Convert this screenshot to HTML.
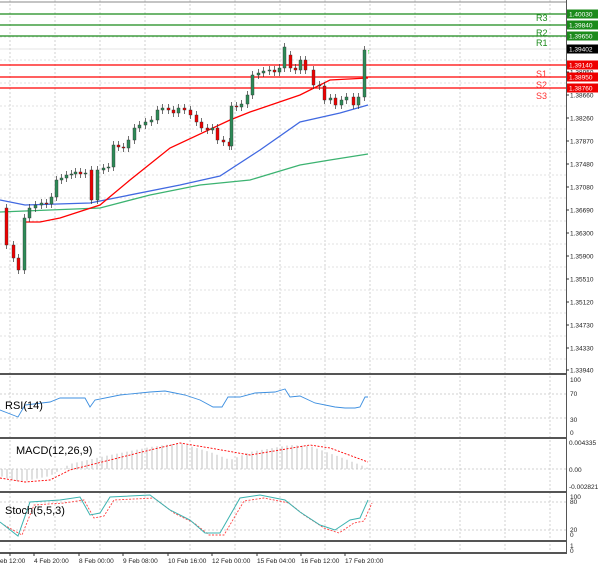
<!DOCTYPE html>
<html><head><meta charset="utf-8"><style>
body{margin:0;background:#fff;width:600px;height:569px;overflow:hidden;font-family:"Liberation Sans",sans-serif}
svg text{font-family:"Liberation Sans",sans-serif}
</style></head><body>
<svg id="s" width="600" height="569" xmlns="http://www.w3.org/2000/svg"></svg>
<script>
var s=document.getElementById('s'),h='';
function L(x1,y1,x2,y2,c,w,d){h+='<line x1="'+x1+'" y1="'+y1+'" x2="'+x2+'" y2="'+y2+'" stroke="'+c+'" stroke-width="'+(w||1)+'"'+(d?' stroke-dasharray="'+d+'"':'')+'/>';}
function P(pts,c,w,d){h+='<polyline fill="none" stroke="'+c+'" stroke-width="'+(w||1)+'"'+(d?' stroke-dasharray="'+d+'"':'')+' points="'+pts.map(function(p){return p.join(',')}).join(' ')+'"/>';}
function T(x,y,t,sz,c,a){h+='<text x="'+x+'" y="'+y+'" font-size="'+sz+'" fill="'+(c||'#000')+'"'+(a?' text-anchor="'+a+'"':'')+'>'+t+'</text>';}
for(var x=10;x<566;x+=45)L(x,0,x,553,'#d0d0d0',1,'2,2');
for(var y=14;y<372;y+=23)L(0,y,566,y,'#e0e0e0',1,'2,2');
[394,418,469,502,530].forEach(function(y){L(0,y,566,y,'#d0d0d0',1,'2,2')});
L(0,2,566,2,'#888',1);
[[14,'#1a8a1a'],[25,'#1a8a1a'],[36,'#1a8a1a']].forEach(function(a){L(0,a[0],566,a[0],a[1],1.3)});
[65,77,88].forEach(function(y){L(0,y,566,y,'#f00',1.3)});
L(0,49,566,49,'#ccc',0.6);
P([[0,212],[50,210],[100,208],[150,195],[200,185],[250,180],[300,165],[330,160],[368,154]],'#3cb371',1.3);
P([[0,200],[25,205],[90,203],[120,197],[180,185],[220,176],[260,150],[300,122],[340,113],[368,105]],'#4169e1',1.3);
P([[23,222],[40,222],[60,218],[100,205],[130,180],[170,148],[230,120],[250,112],[300,95],[330,80],[368,78]],'#f00',1.3);
var c=[[5,208,245],[12,245,258],[17,258,270],[23,270,218],[28,218,208],[34,208,205],[40,205,203],[45,203,204],[50,204,197],[55,197,180],[60,180,178],[65,178,175],[70,175,174],[74,174,172],[79,172,174],[84,174,173],[90,170,200],[96,200,170],[102,170,168],[107,168,167],[112,167,145],[117,145,147],[122,147,148],[127,148,140],[133,140,128],[138,128,125],[144,125,122],[150,122,120],[156,120,110],[161,110,108],[167,108,110],[172,110,113],[177,113,108],[183,108,110],[189,110,115],[195,115,122],[200,122,128],[206,128,130],[211,130,128],[216,128,140],[222,140,142],[228,142,146],[230,146,106],[235,106,107],[240,107,104],[246,104,95],[251,95,75],[257,75,73],[262,73,71],[268,71,70],[273,70,72],[278,72,68],[283,68,47],[289,55,68],[294,68,70],[299,70,60],[304,60,70],[312,70,85],[318,85,86],[323,86,100],[329,100,98],[334,98,105],[340,105,100],[345,100,97],[352,97,105],[357,105,97],[363,97,50]];
c.forEach(function(k){var t=Math.min(k[1],k[2]),b=Math.max(k[1],k[2]);L(k[0]+1.5,t-4,k[0]+1.5,b+4,'#333',0.7);h+='<rect x="'+k[0]+'" y="'+t+'" width="3" height="'+Math.max(1,b-t)+'" fill="'+(k[2]<k[1]?'#2e8b57':'#e00')+'" stroke="#333" stroke-width="0.4"/>';});
T(367,54,'↑',7,'#0c0');
T(536,21,'R3',9,'#1a8a1a');T(536,36,'R2',9,'#1a8a1a');T(536,46,'R1',9,'#1a8a1a');
T(536,77,'S1',9,'#f33');T(536,88,'S2',9,'#f33');T(536,99,'S3',9,'#f33');
L(566.5,0,566.5,553,'#555',1);
var pl=[['1.38660',95],['1.38260',118],['1.37870',141],['1.37480',164],['1.37080',187],['1.36690',210],['1.36300',233],['1.35900',256],['1.35510',279],['1.35120',302],['1.34730',325],['1.34330',348],['1.33940',370],['1.38950',72]];
pl.forEach(function(a){L(566,a[1],569,a[1],'#333');T(570,a[1]+2.5,a[0],6.5,'#222');});
[['1.40030',14,'#1a8a1a'],['1.39840',25,'#1a8a1a'],['1.39650',36,'#1a8a1a'],['1.39402',49,'#000'],['1.39140',65,'#e00'],['1.38950',77,'#e00'],['1.38760',88,'#e00']].forEach(function(a){h+='<rect x="567" y="'+(a[1]-4.5)+'" width="31" height="9" fill="'+a[2]+'"/>';T(569,a[1]+2.5,a[0],6.5,'#fff');});
[374,438,492,541,553].forEach(function(y){L(0,y,567,y,'#555',2)});
P([[0,410],[18,417],[25,405],[50,402],[60,398],[75,398],[85,398],[90,407],[95,400],[120,395],[150,392],[165,391],[175,393],[185,395],[200,400],[213,407],[222,407],[228,397],[240,397],[255,393],[275,392],[285,389],[290,397],[300,396],[315,403],[335,407],[345,408],[355,408],[360,407],[365,397],[368,397]],'#3d8fe0',0.9);
T(5,409,'RSI(14)',11,'#000');
[['100',380],['70',394],['30',420],['0',433]].forEach(function(a){T(570,a[1]+2,a[0],6.5,'#222')});
function mv(x){var p=[[0,476],[20,482],[50,476],[70,464],[110,455],[150,447],[180,443],[210,452],[230,460],[250,452],[290,445],[310,446],[340,457],[368,468]];for(var i=1;i<p.length;i++)if(x<=p[i][0]){var f=(x-p[i-1][0])/(p[i][0]-p[i-1][0]);return p[i-1][1]+f*(p[i][1]-p[i-1][1]);}return 468;}
for(var x=2;x<370;x+=5)L(x,469,x,mv(x),'#bbb',0.9);
P([[0,478],[25,482],[50,480],[70,470],[110,460],[150,450],[180,443],[210,448],[250,455],[280,450],[310,445],[330,448],[368,462]],'#f00',0.9,'2,1.5');
T(16,454,'MACD(12,26,9)',11,'#000');
T(569,445,'0.004335',6.5,'#222');T(569,472,'0.00',6.5,'#222');T(569,489,'-0.002821',6.5,'#222');
var st=[[0,522],[18,536],[30,502],[60,500],[80,497],[90,515],[100,513],[110,497],[150,495],[170,510],[190,520],[205,533],[220,533],[240,498],[260,495],[285,500],[300,512],[320,525],[335,530],[350,520],[360,518],[368,500]];
P(st.map(function(p){return [p[0]+4,Math.min(535,p[1]+3)]}),'#f44',0.9,'2,1.5');
P(st,'#3cb3b0',1);
T(5,514,'Stoch(5,5,3)',11,'#000');
[['100',497],['80',502],['20',530],['0',535],['1',546],['0',551]].forEach(function(a){T(570,a[1]+2,a[0],6.5,'#222')});
[['eb 12:00',0],['4 Feb 20:00',34],['8 Feb 00:00',79],['9 Feb 08:00',123],['10 Feb 16:00',168],['12 Feb 00:00',212],['15 Feb 04:00',257],['16 Feb 12:00',301],['17 Feb 20:00',345]].forEach(function(a){L(a[1]+(a[1]?0:10),553,a[1]+(a[1]?0:10),556,'#333');T(a[1],563,a[0],6.5,'#222');});
s.innerHTML=h;
</script>
</body></html>
